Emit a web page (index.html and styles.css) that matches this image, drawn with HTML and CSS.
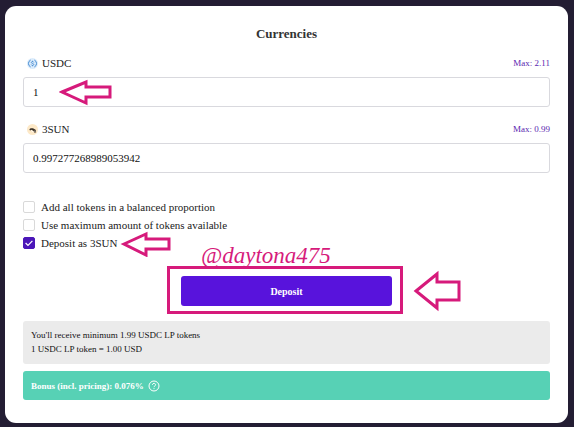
FILE: index.html
```html
<!DOCTYPE html>
<html lang="en">
<head>
  <meta charset="UTF-8" />
  <meta name="viewport" content="width=device-width, initial-scale=1.0" />
  <title>Deposit</title>
  <link rel="stylesheet" href="styles.css">
</head>
<body>
  <main class="card">
    <h1 class="title">Currencies</h1>

    <div class="field-head">
      <svg class="coin" viewBox="0 0 12 12" aria-hidden="true">
        <circle cx="6" cy="6" r="6" fill="#dcecfb" />
        <path d="M4 2.2A4.2 4.2 0 0 0 4 9.8M8 2.2A4.2 4.2 0 0 1 8 9.8" fill="none" stroke="#3b84cf" stroke-width="1" />
        <path d="M7.4 4.8C7.2 3.6 4.7 3.7 4.7 4.9C4.7 6.2 7.4 5.7 7.4 7.1C7.4 8.4 4.8 8.4 4.6 7.2M6 3V4M6 8V9" fill="none" stroke="#3b84cf" stroke-width="0.9" />
      </svg>
      <label for="usdc">USDC</label>
      <button class="max-btn" type="button">Max: 2.11</button>
    </div>
    <div class="field">
      <input type="text" id="usdc" class="amount" value="1" />
      <svg class="arrow arrow-amount" viewBox="0 0 54 28" aria-hidden="true">
        <path d="M3 14L27 4V9H51V19H27V25Z" />
      </svg>
    </div>

    <div class="field-head">
      <svg class="coin" viewBox="0 0 12 12" aria-hidden="true">
        <circle cx="6" cy="6" r="6" fill="#fde9c8" />
        <path d="M2.6 6.2C3 4.6 5.4 4.2 7 5L9.4 6.4L10 9L8.2 9.6L7.4 7.8L5 6.2L3.4 7.2Z" fill="#3a3027" />
        <path d="M5 7.2L6.6 8.6M8.2 7.4L8.8 8.4" fill="none" stroke="#fff" stroke-width="1" />
      </svg>
      <label for="sun">3SUN</label>
      <button class="max-btn" type="button">Max: 0.99</button>
    </div>
    <div class="field">
      <input type="text" id="sun" class="amount" value="0.997277268989053942" />
    </div>

    <div class="options">
      <label class="option"><input type="checkbox" /> Add all tokens in a balanced proportion</label>
      <label class="option"><input type="checkbox" /> Use maximum amount of tokens available</label>
      <label class="option">
        <input type="checkbox" checked /> Deposit as 3SUN
        <svg class="arrow arrow-option" viewBox="0 0 52 26" aria-hidden="true">
          <path d="M4 13L26 3V8H49V18H26V24Z" />
        </svg>
      </label>
    </div>

    <div class="action">
      <button class="deposit-btn" type="button">Deposit</button>
      <span class="highlight"></span>
      <span class="handle">@daytona475</span>
      <svg class="arrow arrow-deposit" viewBox="0 0 48 42" aria-hidden="true">
        <path d="M3 21L24 4V12H46V30H24V38Z" />
      </svg>
    </div>

    <div class="info">
      <p>You'll receive minimum 1.99 USDC LP tokens</p>
      <p>1 USDC LP token = 1.00 USD</p>
    </div>
    <div class="bonus">
      <span>Bonus (incl. pricing): 0.076%</span>
      <svg class="help" viewBox="0 0 12 12" aria-hidden="true">
        <circle cx="6" cy="6" r="5" />
        <path d="M4.4 4.9C4.4 2.8 7.6 2.9 7.6 4.8C7.6 6 6 5.9 6 7.2M6 8.2V9.1" />
      </svg>
    </div>
  </main>
</body>
</html>
```
FILE: styles.css
```css
* {
  box-sizing: border-box;
}
body {
  margin: 0;
  padding: 6px 6px 4px 5px;
  background-color: #231d33;
  font-family: "Liberation Serif", "Times New Roman", serif;
  font-size: 11px;
  color: #222;
}
button, input {
  font-family: inherit;
}
.card {
  padding: 18px 18px 23px;
  background-color: #fff;
  border-radius: 11px;
}
.title {
  margin: 0 0 10px;
  font-size: 13px;
  line-height: 20px;
  text-align: center;
  color: #333;
}
.field-head {
  display: flex;
  align-items: center;
  height: 18px;
  padding-left: 4px;
  margin-bottom: 5px;
}
.coin {
  width: 11px;
  height: 11px;
  margin-right: 4px;
}
.max-btn {
  margin-left: auto;
  padding: 0;
  border: none;
  background: none;
  font-size: 9px;
  color: #5a1fb0;
  cursor: pointer;
}
.field {
  position: relative;
  margin-bottom: 13px;
}
.amount {
  display: block;
  width: 100%;
  height: 30px;
  padding: 0 9px;
  border: 1px solid #d9d9de;
  border-radius: 3px;
  font-size: 11px;
  color: #111;
}
.options {
  margin-top: 25px;
}
.option {
  position: relative;
  display: flex;
  align-items: center;
  gap: 6px;
  width: fit-content;
  height: 18px;
}
.option input {
  appearance: none;
  width: 12px;
  height: 12px;
  margin: 0;
  border: 1px solid #d9d9d9;
  border-radius: 2px;
}
.option input:checked {
  border-color: #4b16b8;
  background: #4b16b8 url("data:image/svg+xml,%3Csvg xmlns='http://www.w3.org/2000/svg' viewBox='0 0 10 10'%3E%3Cpath d='M1.6 5L4 7.4L8.4 2.8' fill='none' stroke='white' stroke-width='1.2'/%3E%3C/svg%3E") center / 10px no-repeat;
}
.action {
  position: relative;
  width: 40%;
  margin: 24px auto 15px;
}
.deposit-btn {
  display: block;
  width: 100%;
  height: 30px;
  border: none;
  border-radius: 3px;
  background-color: #5813dc;
  font-size: 10px;
  font-weight: bold;
  color: #fff;
  cursor: pointer;
}
.info {
  padding: 7px 8px 8px;
  border-radius: 3px;
  background-color: #ebebeb;
  font-size: 9px;
  line-height: 14px;
  color: #111;
}
.info p {
  margin: 0;
}
.bonus {
  display: flex;
  align-items: center;
  gap: 4px;
  height: 29px;
  margin-top: 7px;
  padding: 0 8px;
  border-radius: 3px;
  background-color: #57d1b5;
  font-size: 9px;
  font-weight: bold;
  color: #fff;
}
.help {
  width: 12px;
  height: 12px;
  fill: none;
  stroke: #fff;
  stroke-width: 1;
}

/* tutorial marks drawn over the form */
.arrow {
  position: absolute;
  fill: none;
  stroke: #d61a7b;
  stroke-width: 3;
  pointer-events: none;
}
.arrow-amount {
  top: 1px;
  left: 36px;
  width: 54px;
  height: 28px;
}
.arrow-option {
  top: -3px;
  left: 97px;
  width: 52px;
  height: 26px;
}
.arrow-deposit {
  top: -6px;
  left: 232px;
  width: 48px;
  height: 42px;
}
.highlight {
  position: absolute;
  inset: -10px -11px -8px -14px;
  border: 3px solid #d61a7b;
  pointer-events: none;
}
.handle {
  position: absolute;
  top: -34px;
  left: 20px;
  font-size: 23px;
  font-style: italic;
  line-height: 28px;
  color: #d61a7b;
}
```
